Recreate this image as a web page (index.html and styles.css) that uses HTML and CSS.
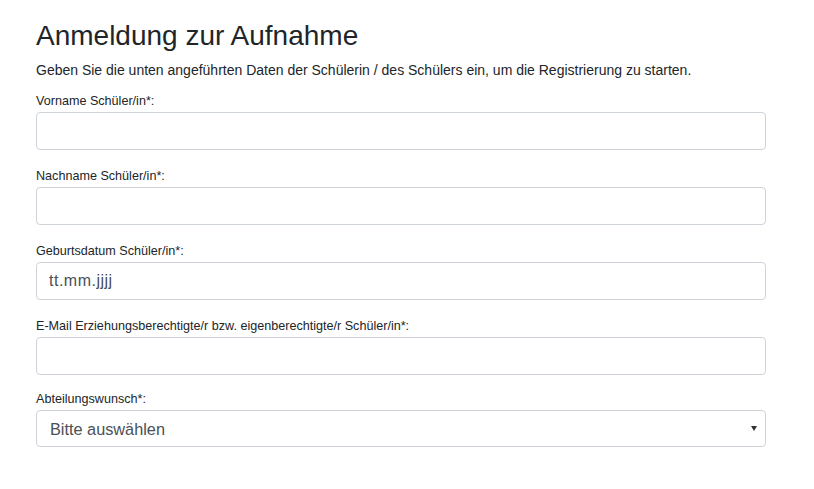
FILE: index.html
```html
<!DOCTYPE html>
<html lang="de">
<head>
<meta charset="utf-8">
<title>Anmeldung zur Aufnahme</title>
<link rel="stylesheet" href="styles.css">
</head>
<body>
<main class="container">
  <h1 class="title">Anmeldung zur Aufnahme</h1>
  <p class="intro">Geben Sie die unten angeführten Daten der Schülerin / des Schülers ein, um die Registrierung zu starten.</p>
  <form class="form">
    <div class="group">
      <label class="label" for="vorname">Vorname Schüler/in*:</label>
      <input class="control" id="vorname" type="text">
    </div>
    <div class="group">
      <label class="label" for="nachname">Nachname Schüler/in*:</label>
      <input class="control" id="nachname" type="text">
    </div>
    <div class="group">
      <label class="label" for="geb">Geburtsdatum Schüler/in*:</label>
      <input class="control date" id="geb" type="text" value="tt.mm.jjjj">
    </div>
    <div class="group group-tight">
      <label class="label" for="mail">E-Mail Erziehungsberechtigte/r bzw. eigenberechtigte/r Schüler/in*:</label>
      <input class="control" id="mail" type="text">
    </div>
    <div class="group">
      <label class="label" for="abt">Abteilungswunsch*:</label>
      <div class="select-wrap">
        <select class="control select" id="abt">
          <option>Bitte auswählen</option>
        </select>
        <span class="arrow"></span>
      </div>
    </div>
  </form>
</main>
</body>
</html>
```

FILE: styles.css
```css
* { box-sizing: border-box; }
html, body { margin: 0; padding: 0; background: #fff; }
body {
  font-family: "Liberation Sans", Arial, sans-serif;
  color: #212529;
}
.container {
  width: 730px;
  margin-left: 36px;
  padding-top: 19px;
}
.title {
  margin: 0;
  font-size: 28px;
  font-weight: 400;
  line-height: 33.6px;
  color: #212529;
}
.intro {
  margin: 7px 0 0;
  font-size: 14px;
  line-height: 21px;
}
.form {
  margin-top: 11px;
}
.group {
  display: flex;
  flex-direction: column;
  margin-bottom: 17px;
}
.group-tight {
  margin-bottom: 15px;
}
.label {
  font-size: 12.6px;
  line-height: 19px;
  margin-bottom: 1px;
}
.control {
  display: block;
  width: 100%;
  height: 38px;
  padding: 6px 12px;
  font-family: "Liberation Sans", Arial, sans-serif;
  font-size: 16px;
  line-height: 24px;
  color: #495057;
  background: #fff;
  border: 1px solid #ced4da;
  border-radius: 4px;
  outline: none;
}
.date {
  letter-spacing: 0.5px;
}
.select-wrap {
  position: relative;
}
.select {
  appearance: none;
  -webkit-appearance: none;
  padding-left: 13px;
  height: 37px;
  font-size: 16.3px;
}
.arrow {
  position: absolute;
  right: 9px;
  top: 16px;
  width: 0;
  height: 0;
  border-left: 3px solid transparent;
  border-right: 3px solid transparent;
  border-top: 5px solid #333;
}
```
